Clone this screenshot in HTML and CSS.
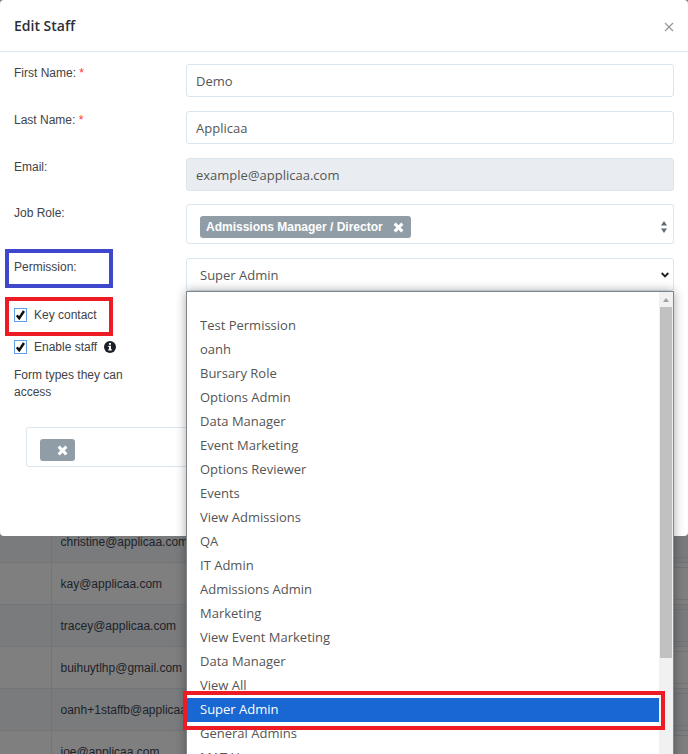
FILE: index.html
```html
<!DOCTYPE html>
<html lang="en">
<head>
<meta charset="utf-8">
<title>Edit Staff</title>
<link rel="stylesheet" href="styles.css">
</head>
<body>
<main class="page">
  <table class="staff">
    <tbody>
      <tr><td></td><td>christine@applicaa.com</td><td><div class="slot"></div></td></tr>
      <tr><td></td><td>kay@applicaa.com</td><td><div class="slot"></div></td></tr>
      <tr><td></td><td>tracey@applicaa.com</td><td><div class="slot"></div></td></tr>
      <tr><td></td><td>buihuytlhp@gmail.com</td><td><div class="slot"></div></td></tr>
      <tr><td></td><td>oanh+1staffb@applicaa.com</td><td><div class="slot"></div></td></tr>
      <tr><td></td><td>joe@applicaa.com</td><td><div class="slot"></div></td></tr>
    </tbody>
  </table>
</main>

<div class="modal" role="dialog" aria-labelledby="title">
  <header class="modal-head">
    <h1 id="title">Edit Staff</h1>
    <button type="button" class="close" aria-label="Close">
      <svg width="10" height="10" viewBox="0 0 10 10"><path d="M1 1l8 8M9 1L1 9" fill="none" stroke="#8f9499" stroke-width="1.1"/></svg>
    </button>
  </header>
  <form class="form">
    <div class="row">
      <label for="first">First Name: <span class="req">*</span></label>
      <input class="field" id="first" type="text" value="Demo">
    </div>
    <div class="row">
      <label for="last">Last Name: <span class="req">*</span></label>
      <input class="field" id="last" type="text" value="Applicaa">
    </div>
    <div class="row">
      <label for="email">Email:</label>
      <input class="field" id="email" type="email" value="example@applicaa.com" readonly>
    </div>
    <div class="row">
      <span class="label">Job Role:</span>
      <div class="tags">
        <span class="tag">Admissions Manager / Director
          <button type="button" aria-label="Remove job role"><svg width="11" height="11" viewBox="0 0 10 10"><path d="M1.500 1.500l7 7M8.500 1.500l-7 7" fill="none" stroke="#fff" stroke-width="2.800"/></svg></button>
        </span>
        <svg class="sort" width="6" height="12" viewBox="0 0 6 12"><path d="M3 0l3 4.500H0zM3 12L0 7.500h6z" fill="#5d6d7a"/></svg>
      </div>
    </div>
    <div class="row">
      <label for="perm" class="marked">Permission:</label>
      <div class="picker">
        <select class="field" id="perm"><option>Super Admin</option></select>
        <svg class="chevron" width="8" height="6" viewBox="0 0 8 6"><path d="M.7 1L4 4.300 7.300 1" fill="none" stroke="#222" stroke-width="1.900"/></svg>
        <div class="menu">
          <ul class="options" role="listbox" aria-label="Permission">
            <li class="blank" role="option"></li>
            <li role="option">Test Permission</li>
            <li role="option">oanh</li>
            <li role="option">Bursary Role</li>
            <li role="option">Options Admin</li>
            <li role="option">Data Manager</li>
            <li role="option">Event Marketing</li>
            <li role="option">Options Reviewer</li>
            <li role="option">Events</li>
            <li role="option">View Admissions</li>
            <li role="option">QA</li>
            <li role="option">IT Admin</li>
            <li role="option">Admissions Admin</li>
            <li role="option">Marketing</li>
            <li role="option">View Event Marketing</li>
            <li role="option">Data Manager</li>
            <li role="option">View All</li>
            <li role="option" class="selected" aria-selected="true">Super Admin</li>
            <li role="option">General Admins</li>
            <li role="option">MAT User</li>
          </ul>
          <div class="scrollbar">
            <svg width="6" height="4" viewBox="0 0 6 4"><path d="M3 0l3 4H0z" fill="#a0a0a0"/></svg>
            <div class="thumb"></div>
          </div>
        </div>
      </div>
    </div>
    <div class="checks">
      <div class="check marked red">
        <input type="checkbox" id="key" checked>
        <svg class="tick" width="9" height="10" viewBox="0 0 9 10"><path d="M.8 5.300l2.400 2.900L8 1" fill="none" stroke="#111" stroke-width="2.500"/></svg>
        <label for="key">Key contact</label>
      </div>
      <div class="check">
        <input type="checkbox" id="enable" checked>
        <svg class="tick" width="9" height="10" viewBox="0 0 9 10"><path d="M.8 5.300l2.400 2.900L8 1" fill="none" stroke="#111" stroke-width="2.500"/></svg>
        <label for="enable">Enable staff</label>
        <svg width="12" height="12" viewBox="0 0 12 12"><circle cx="6" cy="6" r="6" fill="#1d2028"/><path d="M5 2h2v1.700H5zM4.300 4.800H7v3.400h.8v1.300H4.300V8.200H5V6.100h-.7z" fill="#fff"/></svg>
      </div>
    </div>
    <div class="types">Form types they can access</div>
    <div class="tags inset">
      <span class="tag"><button type="button" aria-label="Remove form type"><svg width="11" height="11" viewBox="0 0 10 10"><path d="M1.500 1.500l7 7M8.500 1.500l-7 7" fill="none" stroke="#fff" stroke-width="2.800"/></svg></button></span>
    </div>
  </form>
</div>
</body>
</html>
```
FILE: styles.css
```css
*, *::before, *::after { box-sizing: border-box; }

body {
  margin: 0;
  height: 100vh;
  overflow: hidden;
  position: relative;
  background: #7f7f7f;
  color: #3f4247;
  font: 12px/18px "Liberation Sans", Arial, sans-serif;
}

/* Dimmed staff list behind the dialog */
.page { padding-top: 520px; }
.staff { width: 100%; border-collapse: collapse; table-layout: fixed; color: #20222b; }
.staff tr { height: 42px; background: #7f7f7f; }
.staff tr:nth-child(odd) { background: #797b7c; }
.staff td { padding: 0 9px; border: 1px solid #717577; border-left-width: 0; white-space: nowrap; }
.staff td:first-child { width: 51px; }
.staff td:last-child { width: 120px; padding: 0; border-right: 0; }
.slot { height: 33px; border: solid #717577; border-width: 1px 0; }

.modal {
  position: absolute;
  top: 0;
  left: 0;
  right: 0;
  background: #fff;
  border-radius: 4px;
  padding-bottom: 69px;
}
.modal-head {
  display: flex;
  align-items: center;
  justify-content: space-between;
  height: 52px;
  padding: 0 14px;
  border-bottom: 1px solid #dfe8ee;
}
h1 { margin: 0; font: 600 14px/20px "Open Sans", sans-serif; color: #2c2f38; }
button { border: 0; background: none; padding: 0; display: flex; }
.close { margin-top: 2px; }

.form { padding: 12px 14px 0; }
.row { display: grid; grid-template-columns: 172px 1fr; align-items: start; margin-bottom: 14px; }
.row:nth-child(3) { margin-bottom: 13px; }
.row > label, .label { justify-self: start; }
.req { color: #f33; }

.field {
  width: 100%;
  height: 33px;
  padding: 0 9px;
  border: 1px solid #dae6ed;
  border-radius: 3px;
  background: #fff;
  color: #555;
  font: 13px/20px "Open Sans", sans-serif;
  appearance: none;
  display: block;
}
.field[readonly] { background: #e9edf2; }
select.field { padding: 0 13px; }

.tags {
  display: flex;
  align-items: center;
  height: 40px;
  padding: 6px 6px 0 13px;
  border: 1px solid #dae6ed;
  border-radius: 3px;
}
.tag {
  display: flex;
  align-items: center;
  gap: 10px;
  height: 22px;
  padding: 0 7px 0 6px;
  border-radius: 3px;
  background: #909da6;
  color: #fff;
  font-weight: bold;
}
.sort { margin-left: auto; }

/* Highlight frames */
.marked { position: relative; }
.marked::before {
  content: "";
  position: absolute;
  top: -9px;
  left: -9px;
  width: 108px;
  height: 39px;
  border: 4px solid #3f48cc;
}
.marked.red::before { border-color: #ed1c24; }

.picker { position: relative; }
.chevron { position: absolute; right: 5px; top: 14px; }
.menu {
  position: absolute;
  z-index: 1;
  top: 33px;
  left: 0;
  right: 0;
  display: flex;
  border: 1px solid #81868a;
  background: #fff;
  box-shadow: 0 0 10px rgba(0, 0, 0, .35);
}
.options {
  flex: 1;
  margin: 0;
  padding: 0;
  list-style: none;
  color: #555;
  font: 13px/22px "Open Sans", sans-serif;
}
.options li { height: 24px; padding-left: 13px; }
.options .blank { height: 22px; }
.options .selected { position: relative; background: #1967d2; color: #fff; }
.selected::after {
  content: "";
  position: absolute;
  inset: -7px -6px -8px -4px;
  border: 4px solid #ed1c24;
}
.scrollbar {
  display: flex;
  flex-direction: column;
  align-items: center;
  width: 14px;
  padding-top: 6px;
  gap: 5px;
  background: #f1f1f1;
}
.thumb { width: 12px; height: 351px; background: #c1c1c1; }

.checks { display: grid; gap: 14px; padding-top: 1px; }
.check { display: flex; align-items: center; gap: 7px; position: relative; }
.check input {
  appearance: none;
  width: 13px;
  height: 14px;
  margin: 0;
  border: 1px solid #5f9ee8;
  background: #fff;
}
.tick { position: absolute; left: 2px; top: 4px; }
.types { width: 125px; margin-top: 11px; line-height: 17px; }
.inset { margin: 26px 0 0 12px; }
.inset .tag { padding-left: 17px; }
```
